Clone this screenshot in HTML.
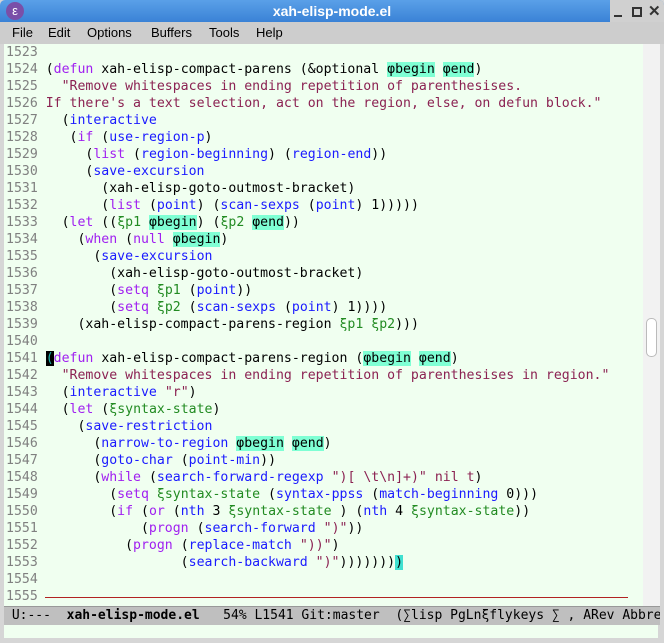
<!DOCTYPE html>
<html><head><meta charset="utf-8"><style>
body{margin:0;width:664px;height:643px;overflow:hidden;background:#d6d6d6;font-family:"Liberation Sans",sans-serif;position:relative}
.title{position:absolute;left:0;top:0;width:664px;height:22px;background:linear-gradient(#5aa0e8,#3a82d6);color:#fff;font-weight:bold;font-size:14px;text-align:center;line-height:22px;border-radius:5px 5px 0 0}
.menu{position:absolute;left:0;top:22px;width:664px;height:22px;background:#cdcdcd;font-size:13px;line-height:22px}
.menu span{position:absolute;top:0}
.ed{position:absolute;left:4px;top:44px;width:639px;height:562px;background:#f0fff0}
.sb{position:absolute;left:643px;top:44px;width:17px;height:562px;background:#f2f2f2}
.thumb{position:absolute;left:646px;top:318px;width:9px;height:37px;background:#fff;border:1px solid #bbb;border-radius:5px}
pre{margin:0;position:absolute;left:6px;top:44px;font-family:"DejaVu Sans Mono",monospace;font-size:13.2px;line-height:17px;color:#000}
.n{color:#808080}.k{color:#a020f0}.f{color:#1a1aff}.s{color:#8b2252}.v{color:#228b22}.h{background:#7fffd4}
.ml{position:absolute;left:4px;top:606px;width:656px;height:18px;background:#bfbfbf;border-top:1px solid #999;font-family:"DejaVu Sans Mono",monospace;font-size:13px;line-height:18px;white-space:pre;overflow:hidden}
.mb{position:absolute;left:4px;top:625px;width:654px;height:13px;background:#f0fff0}
.ctl{position:absolute;top:0;height:22px;width:22px;background:#cfcfcf}
</style></head><body>
<div class="title">xah-elisp-mode.el</div>
<div style="position:absolute;left:610px;top:0;width:54px;height:22px;background:#d0d0d0;border-radius:0 5px 0 0"></div>
<div style="position:absolute;left:614px;top:15px;width:8px;height:2px;background:#333"></div>
<div style="position:absolute;left:632px;top:7px;width:6px;height:6px;border:2px solid #333"></div>
<div style="position:absolute;left:648px;top:2px;color:#333;font-size:15px;font-weight:bold">✕</div>
<div style="position:absolute;left:6px;top:2px;width:18px;height:18px;border-radius:50%;background:#7a4fa8;color:#fff;font-size:13px;line-height:18px;text-align:center">ε</div>
<div class="menu"><span style="left:12px">File</span><span style="left:48px">Edit</span><span style="left:87px">Options</span><span style="left:151px">Buffers</span><span style="left:209px">Tools</span><span style="left:256px">Help</span></div>
<div class="ed"></div>
<div class="sb"></div><div class="thumb"></div>
<pre><span class="n">1523</span>
<span class="n">1524</span> (<span class="k">defun</span> xah-elisp-compact-parens (&amp;optional <span class="h">φbegin</span> <span class="h">φend</span>)
<span class="n">1525</span>   <span class="s">"Remove whitespaces in ending repetition of parenthesises.</span>
<span class="n">1526</span> <span class="s">If there's a text selection, act on the region, else, on defun block."</span>
<span class="n">1527</span>   (<span class="f">interactive</span>
<span class="n">1528</span>    (<span class="k">if</span> (<span class="f">use-region-p</span>)
<span class="n">1529</span>      (<span class="k">list</span> (<span class="f">region-beginning</span>) (<span class="f">region-end</span>))
<span class="n">1530</span>      (<span class="f">save-excursion</span>
<span class="n">1531</span>        (xah-elisp-goto-outmost-bracket)
<span class="n">1532</span>        (<span class="k">list</span> (<span class="f">point</span>) (<span class="f">scan-sexps</span> (<span class="f">point</span>) 1)))))
<span class="n">1533</span>   (<span class="k">let</span> ((<span class="v">ξp1</span> <span class="h">φbegin</span>) (<span class="v">ξp2</span> <span class="h">φend</span>))
<span class="n">1534</span>     (<span class="k">when</span> (<span class="k">null</span> <span class="h">φbegin</span>)
<span class="n">1535</span>       (<span class="f">save-excursion</span>
<span class="n">1536</span>         (xah-elisp-goto-outmost-bracket)
<span class="n">1537</span>         (<span class="k">setq</span> <span class="v">ξp1</span> (<span class="f">point</span>))
<span class="n">1538</span>         (<span class="k">setq</span> <span class="v">ξp2</span> (<span class="f">scan-sexps</span> (<span class="f">point</span>) 1))))
<span class="n">1539</span>     (xah-elisp-compact-parens-region <span class="v">ξp1</span> <span class="v">ξp2</span>)))
<span class="n">1540</span>
<span class="n">1541</span> <span style="background:#000;color:#20b2aa">(</span><span class="k">defun</span> xah-elisp-compact-parens-region (<span class="h">φbegin</span> <span class="h">φend</span>)
<span class="n">1542</span>   <span class="s">"Remove whitespaces in ending repetition of parenthesises in region."</span>
<span class="n">1543</span>   (<span class="f">interactive</span> <span class="s">"r"</span>)
<span class="n">1544</span>   (<span class="k">let</span> (<span class="v">ξsyntax-state</span>)
<span class="n">1545</span>     (<span class="f">save-restriction</span>
<span class="n">1546</span>       (<span class="f">narrow-to-region</span> <span class="h">φbegin</span> <span class="h">φend</span>)
<span class="n">1547</span>       (<span class="f">goto-char</span> (<span class="f">point-min</span>))
<span class="n">1548</span>       (<span class="k">while</span> (<span class="f">search-forward-regexp</span> <span class="s">")[ \t\n]+)"</span> <span class="s">nil</span> <span class="s">t</span>)
<span class="n">1549</span>         (<span class="k">setq</span> <span class="v">ξsyntax-state</span> (<span class="f">syntax-ppss</span> (<span class="f">match-beginning</span> 0)))
<span class="n">1550</span>         (<span class="k">if</span> (<span class="k">or</span> (<span class="f">nth</span> 3 <span class="v">ξsyntax-state</span> ) (<span class="f">nth</span> 4 <span class="v">ξsyntax-state</span>))
<span class="n">1551</span>             (<span class="k">progn</span> (<span class="f">search-forward</span> <span class="s">")"</span>))
<span class="n">1552</span>           (<span class="k">progn</span> (<span class="f">replace-match</span> <span class="s">"))"</span>)
<span class="n">1553</span>                  (<span class="f">search-backward</span> <span class="s">")"</span>)))))))<span style="background:#40e0d0">)</span>
<span class="n">1554</span>
<span class="n">1555</span></pre>
<div style="position:absolute;left:45px;top:597px;width:583px;height:1px;background:#b22222"></div>
<div class="ml"> U:---  <b>xah-elisp-mode.el</b>   54% L1541 Git:master  (∑lisp PgLnξflykeys ∑ , ARev Abbrev)</div>
<div class="mb"></div>
</body></html>
